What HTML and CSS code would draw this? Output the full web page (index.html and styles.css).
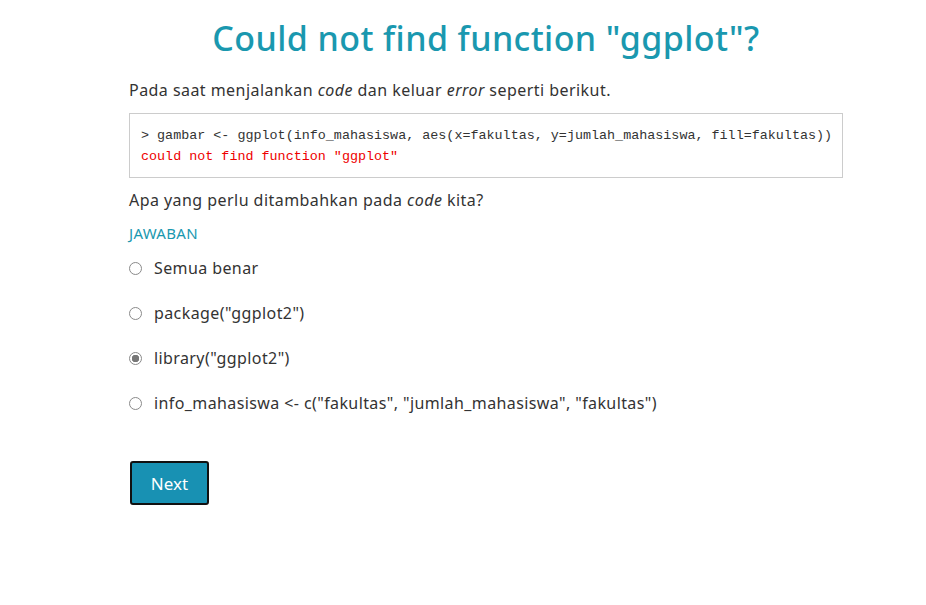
FILE: index.html
```html
<!DOCTYPE html>
<html lang="id">
<head>
<meta charset="utf-8">
<title>Quiz</title>
<link rel="stylesheet" href="styles.css">
</head>
<body>
<main class="page">
  <h1 class="title">Could not find function "ggplot"?</h1>
  <p class="lead">Pada saat menjalankan <em>code</em> dan keluar <em>error</em> seperti berikut.</p>
  <pre class="code"><span class="cmd">&gt; gambar &lt;- ggplot(info_mahasiswa, aes(x=fakultas, y=jumlah_mahasiswa, fill=fakultas))</span>
<span class="err">could not find function "ggplot"</span></pre>
  <p class="question">Apa yang perlu ditambahkan pada <em>code</em> kita?</p>
  <div class="answer-label">JAWABAN</div>
  <div class="options">
    <label class="option"><input type="radio" name="q"> <span>Semua benar</span></label>
    <label class="option"><input type="radio" name="q"> <span>package("ggplot2")</span></label>
    <label class="option"><input type="radio" name="q" checked> <span>library("ggplot2")</span></label>
    <label class="option"><input type="radio" name="q"> <span>info_mahasiswa &lt;- c("fakultas", "jumlah_mahasiswa", "fakultas")</span></label>
  </div>
  <button class="next">Next</button>
</main>
</body>
</html>
```
FILE: styles.css
```css
html, body {
  margin: 0;
  padding: 0;
  background: #fff;
}
body {
  font-family: "Noto Sans", "Open Sans", sans-serif;
  color: #333;
}
.page {
  width: 714px;
  margin-left: 129px;
  display: flex;
  flex-direction: column;
  align-items: flex-start;
}
.title {
  align-self: center;
  margin: 16px 0 0 0;
  font-size: 34px;
  font-weight: 500;
  color: #1a98af;
  line-height: 44px;
  letter-spacing: 0.4px;
}
.lead {
  margin: 19px 0 0 0;
  font-size: 16px;
  line-height: 22px;
  letter-spacing: 0.45px;
}
.code {
  box-sizing: border-box;
  width: 714px;
  margin: 12px 0 0 0;
  padding: 11px 11px 10px 11px;
  border: 1px solid #ccc;
  font-family: "Liberation Mono", monospace;
  font-size: 13.4px;
  line-height: 21px;
  color: #333;
}
.err {
  color: #e00;
}
.question {
  margin: 11px 0 0 0;
  font-size: 16px;
  line-height: 22px;
  letter-spacing: 0.45px;
}
.answer-label {
  margin-top: 11px;
  font-size: 15px;
  line-height: 22px;
  color: #1a98af;
  letter-spacing: 0.3px;
}
.options {
  display: flex;
  flex-direction: column;
  gap: 23px;
  margin-top: 13px;
}
.option {
  display: flex;
  align-items: center;
  gap: 12px;
  font-size: 16px;
  line-height: 22px;
  letter-spacing: 0.4px;
}
.option input {
  appearance: none;
  -webkit-appearance: none;
  box-sizing: border-box;
  margin: 0;
  width: 13px;
  height: 13px;
  border: 1px solid #8a8a8a;
  border-radius: 50%;
  background: #fff;
}
.option input:checked {
  background: radial-gradient(circle, #777 0 3.5px, #fff 4px);
  border-color: #8a8a8a;
}
.next {
  margin-top: 47px;
  margin-left: 1px;
  width: 79px;
  height: 44px;
  background: #1891b3;
  color: #fff;
  border: 2px solid #111;
  border-radius: 3px;
  font-family: "Noto Sans", sans-serif;
  font-size: 17px;
  font-weight: 400;
}
```
